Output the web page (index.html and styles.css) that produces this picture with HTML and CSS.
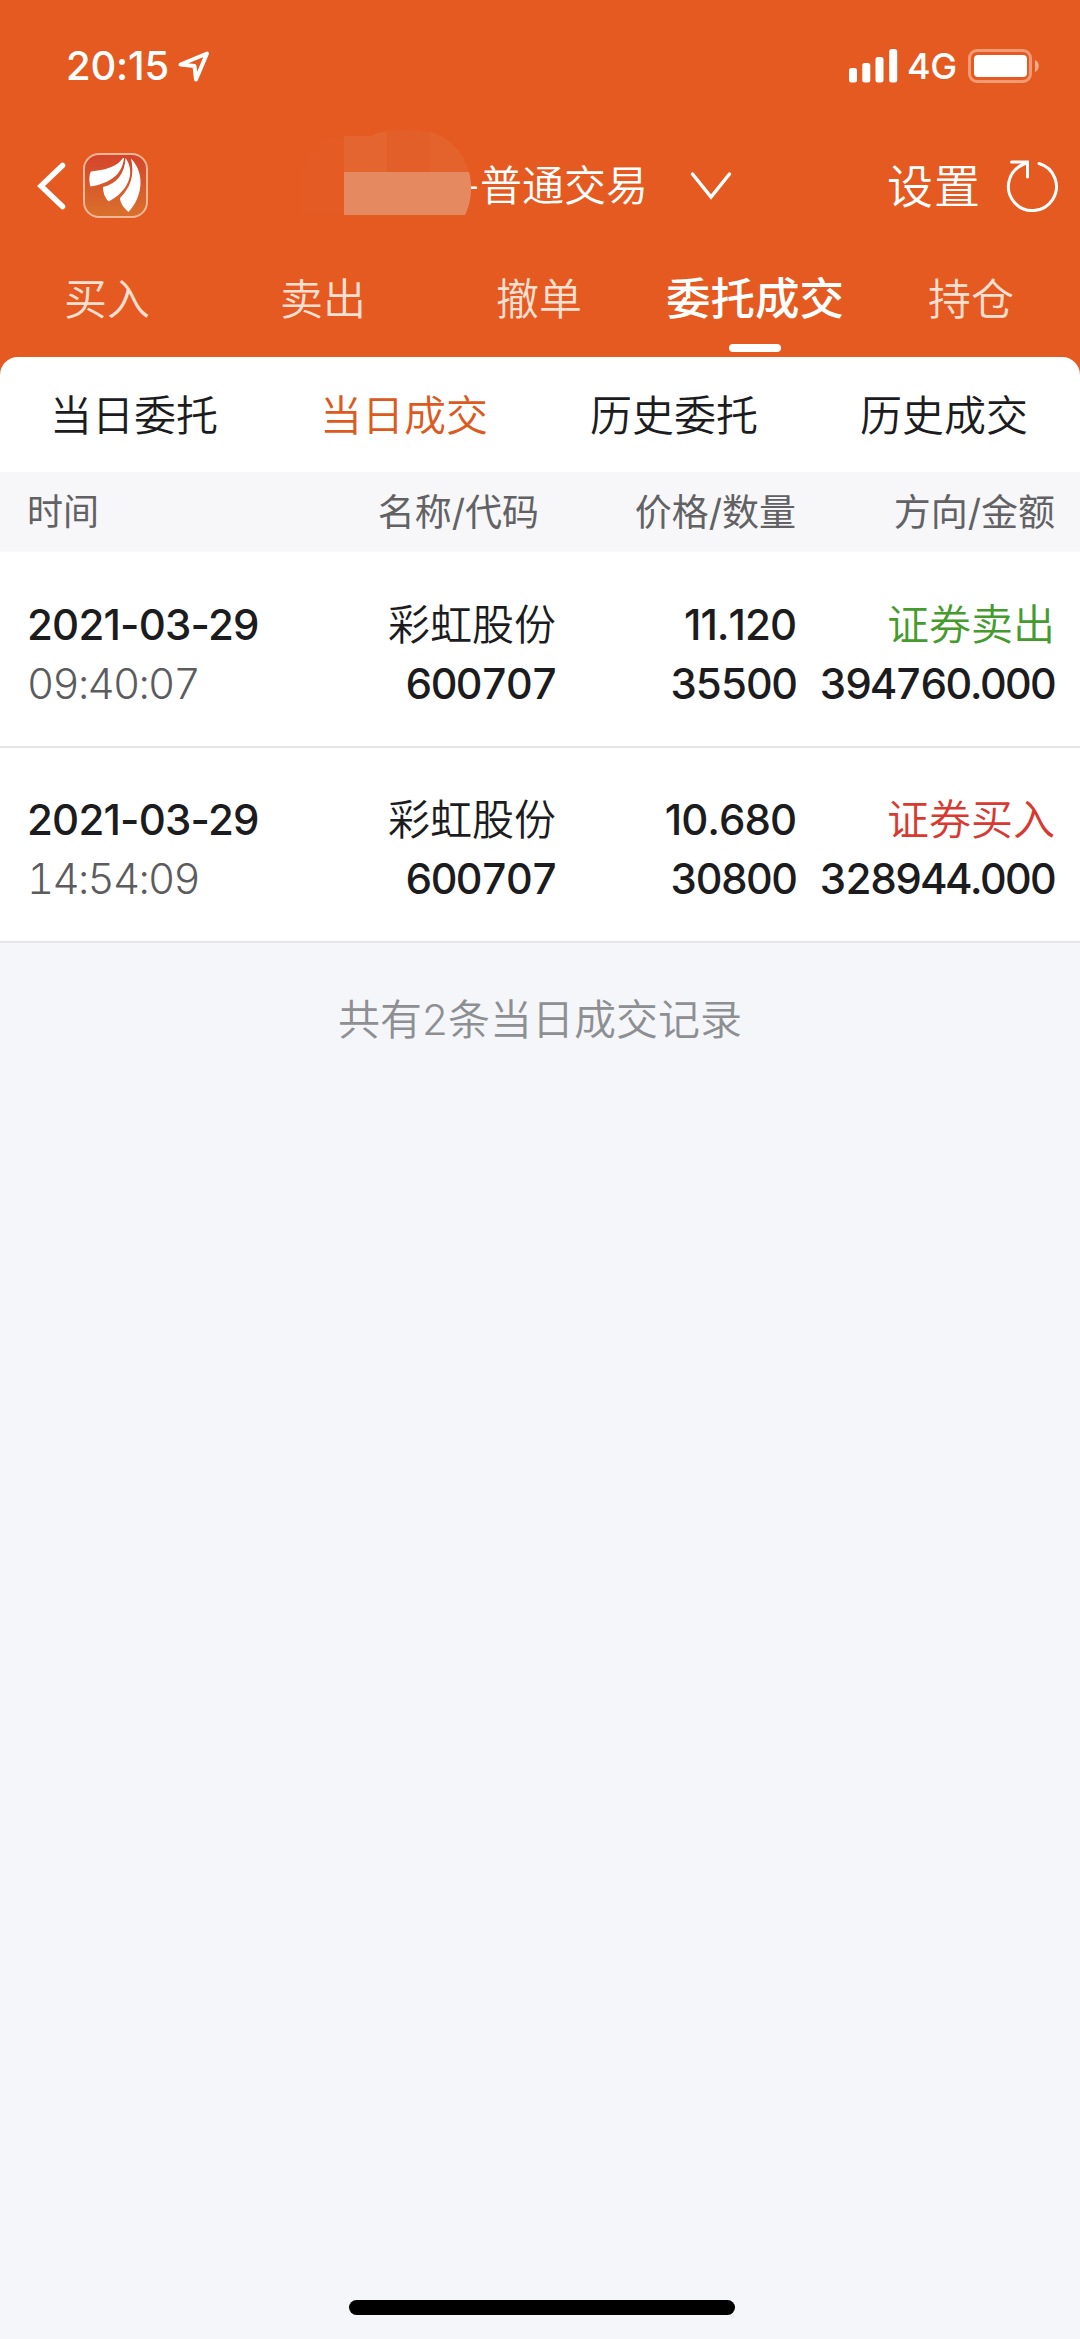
FILE: index.html
```
<!DOCTYPE html>
<html lang="zh-CN">

<head>
    <meta charset="UTF-8">
    <title>当日成交</title>
    <link rel="stylesheet" href="styles.css">
</head>

<body>
    <header class="header">
        <div class="status-bar">
            <span class="clock">20:15</span>
            <svg class="location" width="34" height="34" viewBox="0 0 34 34">
                <path d="M4.5 15.5L31 4.5L20 30.5L18.5 17Z" />
            </svg>
            <svg class="signal" width="49" height="34" viewBox="0 0 49 34">
                <rect x="0" y="19" width="8" height="14.5" rx="2.5" />
                <rect x="13.3" y="14" width="8" height="19.5" rx="2.5" />
                <rect x="26.5" y="8" width="8" height="25.5" rx="2.5" />
                <rect x="40.2" y="0" width="8" height="33.5" rx="2.5" />
            </svg>
            <span class="network">4G</span>
            <svg class="battery" width="72" height="34" viewBox="0 0 72 34">
                <rect class="battery-frame" x="1.5" y="1.5" width="61" height="31" rx="7.5" />
                <rect x="6" y="6" width="53" height="22" rx="4" />
                <path class="battery-tip" d="M67 11C72 13 72 21 67 23Z" />
            </svg>
        </div>

        <div class="nav-bar">
            <svg class="back" width="32" height="50" viewBox="0 0 32 50">
                <path d="M27.500 4.500L6 25L27.500 45.500" />
            </svg>
            <svg class="logo" width="66" height="66" viewBox="0 0 66 66">
                <defs>
                    <linearGradient id="logoBg" x1="0" y1="0" x2="0" y2="1">
                        <stop offset="0" stop-color="#d5442b" />
                        <stop offset="1" stop-color="#da702c" />
                    </linearGradient>
                </defs>
                <rect class="logo-frame" x="1" y="1" width="63" height="63" rx="15" fill="url(#logoBg)" />
                <path d="M40 5C34 14 22 17 8 18.500C6 21 6 29 7.500 33.500C22 31 39 25 41 5Z" />
                <path d="M42.500 5C42 20 34 31 20 34C20 40 22 45 25.500 48.500C43 40 54 21 42.500 5Z" />
                <path d="M48 5.500C52 23 47 35 37 45C37 50 41 55 45.500 59C59 45 63 21 48 5.500Z" />
            </svg>
            <div class="account">
                <!-- 账号打码 -->
                <svg class="mosaic" width="171" height="86" viewBox="0 0 171 86">
                    <path fill="#e45c23" d="M0 86V43C6 24 20 10 43 7V86Z" />
                    <path fill="#e4652f" d="M43 7H70C76 4 80 3 86 2V43H43Z" />
                    <path fill="#e25f29" d="M86 2C100 0 116 0 129 3V43H86Z" />
                    <path fill="#e4622c" d="M129 3C148 8 163 23 168 43H129Z" />
                    <path fill="#e58a60" d="M43 43H168C172 58 170 74 164 86H43Z" />
                </svg>
                <span class="account-type">-普通交易</span>
                <svg class="arrow-down" width="42" height="30" viewBox="0 0 42 30">
                    <path d="M2.500 3L21 26L39.500 3" />
                </svg>
            </div>
            <span class="setting">设置</span>
            <svg class="refresh" width="54" height="54" viewBox="0 0 54 54">
                <path d="M33 5.500A24 24 0 1 1 17 6.500L21.500 4.500M5.500 4H21.500V19" />
            </svg>
        </div>

        <nav class="tabs">
            <span class="tab">买入</span>
            <span class="tab">卖出</span>
            <span class="tab">撤单</span>
            <span class="tab active">委托成交</span>
            <span class="tab">持仓</span>
        </nav>
    </header>

    <main class="content">
        <nav class="sub-tabs">
            <span class="sub-tab">当日委托</span>
            <span class="sub-tab active">当日成交</span>
            <span class="sub-tab">历史委托</span>
            <span class="sub-tab">历史成交</span>
        </nav>

        <div class="row table-head">
            <span class="time">时间</span>
            <span class="name">名称/代码</span>
            <span class="price">价格/数量</span>
            <span class="amount">方向/金额</span>
        </div>

        <div class="row record">
            <div class="time">
                <p>2021-03-29</p>
                <p class="clock-time">09:40:07</p>
            </div>
            <div class="name">
                <p>彩虹股份</p>
                <p>600707</p>
            </div>
            <div class="price">
                <p>11.120</p>
                <p>35500</p>
            </div>
            <div class="amount">
                <p class="sell">证券卖出</p>
                <p>394760.000</p>
            </div>
        </div>

        <div class="row record">
            <div class="time">
                <p>2021-03-29</p>
                <p class="clock-time">14:54:09</p>
            </div>
            <div class="name">
                <p>彩虹股份</p>
                <p>600707</p>
            </div>
            <div class="price">
                <p>10.680</p>
                <p>30800</p>
            </div>
            <div class="amount">
                <p class="buy">证券买入</p>
                <p>328944.000</p>
            </div>
        </div>
    </main>

    <p class="total">共有2条当日成交记录</p>

    <div class="home-bar"></div>
</body>

</html>
```
FILE: styles.css
```
* {
    box-sizing: border-box;
}

body {
    display: flex;
    flex-direction: column;
    width: 1080px;
    height: 2339px;
    margin: 0;
    background-color: #f5f6fa;
    color: #1c1c1e;
    font-family: Inter, "Noto Sans CJK SC", sans-serif;
    font-size: 42px;
    overflow: hidden;
}

p {
    margin: 0;
}

svg {
    display: block;
    flex: none;
}

.header {
    height: 375px;
    background-color: #e55a20;
    color: #fff;
}

.status-bar {
    display: flex;
    align-items: center;
    height: 132px;
    padding: 0 40px 0 66px;
    fill: #fff;
}

.clock {
    width: 110px;
    padding-bottom: 1px;
    font-size: 40px;
    font-weight: 450;
    letter-spacing: -0.2px;
    white-space: nowrap;
}

.location {
    fill: none;
    stroke: #fff;
    stroke-width: 4;
    stroke-linejoin: round;
}

.signal {
    margin-left: auto;
}

.network {
    width: 70px;
    padding-left: 9px;
    font-size: 36px;
    font-weight: 500;
    letter-spacing: -0.5px;
}

.battery-frame {
    fill: none;
    stroke: #f09b75;
    stroke-width: 3;
}

.battery-tip {
    fill: #f3ad8d;
}

.nav-bar {
    display: flex;
    align-items: center;
    height: 107px;
    padding: 0 20px 0 35px;
}

.back {
    fill: none;
    stroke: #fff;
    stroke-width: 5.5;
    stroke-linecap: round;
}

.logo {
    margin-left: 16px;
    fill: #fff;
}

.logo-frame {
    stroke: #f5b795;
    stroke-width: 2;
}

.account {
    display: flex;
    align-items: center;
    height: 107px;
    margin-left: 152px;
}

.mosaic {
    position: relative;
    z-index: 1;
    align-self: flex-end;
    margin-bottom: 24px;
}

.account-type {
    width: 229px;
    margin-left: -11px;
    padding-bottom: 6px;
    font-weight: 350;
    white-space: nowrap;
}

.arrow-down {
    fill: none;
    stroke: #fff;
    stroke-width: 3.5;
    stroke-linecap: round;
}

.setting {
    margin-left: auto;
    padding-bottom: 6px;
    font-size: 46px;
    font-weight: 350;
    letter-spacing: 1px;
}

.refresh {
    margin-left: 25px;
    margin-bottom: 2px;
    fill: none;
    stroke: #fff;
    stroke-width: 3;
    stroke-linecap: round;
}

.tabs {
    display: flex;
    height: 118px;
    line-height: 120px;
}

.tab {
    display: flex;
    flex-direction: column;
    align-items: center;
    flex: 1;
    padding-right: 2px;
    color: #fbdfd1;
    font-size: 43px;
    font-weight: 350;
}

.tab.active {
    color: #fff;
    font-size: 44.5px;
    font-weight: 500;
}

.tab.active::after {
    content: "";
    width: 52px;
    height: 8px;
    margin-top: -15px;
    border-radius: 4px;
    background-color: #fff;
}

.content {
    margin-top: -18px;
    border-radius: 18px 18px 0 0;
    background-color: #fff;
}

.sub-tabs {
    display: flex;
    height: 115px;
    line-height: 117px;
}

.sub-tab {
    flex: 1;
    padding-right: 2px;
    text-align: center;
    font-weight: 350;
}

.sub-tab.active {
    color: #dd5a1f;
}

/* 四列：时间、名称、价格、方向 */
.row {
    display: grid;
    grid-template-columns: 270px 259px 240px 259px;
    padding: 0 26px 0 27px;
    text-align: right;
}

.row .time {
    text-align: left;
}

.table-head {
    height: 80px;
    line-height: 81px;
    background-color: #f7f7f9;
    border-bottom: 1px solid #f9f9fb;
    color: #626264;
    font-size: 37px;
}

.table-head .time {
    font-size: 36px;
}

.table-head .name {
    padding-right: 17px;
}

.record {
    height: 195px;
    padding-top: 42px;
    border-bottom: 2px solid #e5e5e7;
    line-height: 59px;
    font-weight: 470;
    letter-spacing: -2.1px;
    font-variant-numeric: tabular-nums;
}

.table-head + .record {
    height: 196px;
    padding-top: 43px;
}

.record .time {
    font-variant-numeric: normal;
    letter-spacing: -0.8px;
}

.record .clock-time {
    color: #5c5c5e;
    font-weight: 330;
    font-variant-numeric: tabular-nums;
    letter-spacing: -1.7px;
}

.record .name p:first-child,
.record .amount p:first-child {
    font-weight: 350;
    letter-spacing: 0;
}

.record .price p:first-child {
    font-kerning: none;
    font-variant-numeric: normal;
    letter-spacing: -1px;
}

.sell {
    color: #459b2d;
}

.buy {
    color: #d83a31;
}

.total {
    margin-top: 46px;
    line-height: 61px;
    color: #8e8f92;
    font-weight: 350;
    text-align: center;
}

.home-bar {
    width: 386px;
    height: 15px;
    margin: auto auto 24px 349px;
    border-radius: 8px;
    background-color: #000;
}
```
